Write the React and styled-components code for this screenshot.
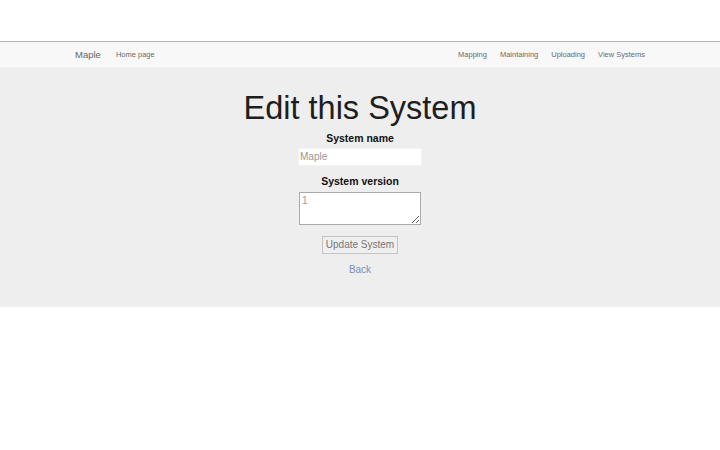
import React from "react";
import styled, { createGlobalStyle } from "styled-components";

const GlobalStyle = createGlobalStyle`
  body {
    margin: 0;
    background: #fff;
    font-family: "Liberation Sans", Arial, sans-serif;
    color: #222;
  }
`;

const Page = styled.div`
  padding-top: 41px;
`;

const Navbar = styled.nav`
  border-top: 1px solid #b4b4b4;
  background: #f8f8f8;
  height: 25px;
`;

const NavInner = styled.div`
  height: 100%;
  padding: 0 75px;
  display: flex;
  align-items: center;
  justify-content: space-between;
`;

const NavGroup = styled.div`
  display: flex;
  align-items: center;
  gap: ${(p) => p.gap || 15}px;
`;

const Brand = styled.a`
  font-size: 9.5px;
  color: #666;
  text-decoration: none;
`;

const NavLink = styled.a`
  font-size: 7.5px;
  color: #6a6a6a;
  text-decoration: none;
`;

const Main = styled.main`
  background: #eeeeee;
  height: 240px;
  padding-top: 23px;
  box-sizing: border-box;
  display: flex;
  flex-direction: column;
  align-items: center;
`;

const Title = styled.h1`
  margin: 0;
  font-size: 32.5px;
  font-weight: 400;
  line-height: 36px;
  color: #1e1e1e;
`;

const Label = styled.label`
  display: block;
  font-size: 10.5px;
  font-weight: 700;
  color: #111;
  margin-top: ${(p) => p.top || 0}px;
  line-height: 14px;
`;

const TextInput = styled.input`
  width: 124px;
  height: 18px;
  box-sizing: border-box;
  margin-top: 2.5px;
  border: 1px solid #f2f2f2;
  background: #fff;
  padding: 0 1px;
  font-family: inherit;
  font-size: 10px;
  color: #999;
  outline: none;
`;

const TextArea = styled.textarea`
  width: 122px;
  height: 33px;
  box-sizing: border-box;
  margin-top: 3.5px;
  border: 1px solid #aaa;
  background: #fff;
  padding: 2px 2px;
  font-family: inherit;
  font-size: 10px;
  color: #999;
  resize: vertical;
  outline: none;
`;

const Button = styled.button`
  margin-top: 11px;
  width: 76px;
  height: 18px;
  box-sizing: border-box;
  border: 1px solid #c4c4c4;
  background: #efefef;
  font-family: inherit;
  font-size: 10px;
  color: #777;
  padding: 0;
  white-space: nowrap;
`;

const BackLink = styled.a`
  margin-top: 9px;
  font-size: 10px;
  line-height: 13px;
  color: #7a8fb8;
  text-decoration: none;
`;

export default function App() {
  return (
    <Page>
      <GlobalStyle />
      <Navbar>
        <NavInner>
          <NavGroup gap={15}>
            <Brand href="#">Maple</Brand>
            <NavLink href="#">Home page</NavLink>
          </NavGroup>
          <NavGroup gap={13}>
            <NavLink href="#">Mapping</NavLink>
            <NavLink href="#">Maintaining</NavLink>
            <NavLink href="#">Uploading</NavLink>
            <NavLink href="#">View Systems</NavLink>
          </NavGroup>
        </NavInner>
      </Navbar>
      <Main>
        <Title>Edit this System</Title>
        <Label top={5}>System name</Label>
        <TextInput defaultValue="Maple" />
        <Label top={8.5}>System version</Label>
        <TextArea defaultValue="1" />
        <Button>Update System</Button>
        <BackLink href="#">Back</BackLink>
      </Main>
    </Page>
  );
}
